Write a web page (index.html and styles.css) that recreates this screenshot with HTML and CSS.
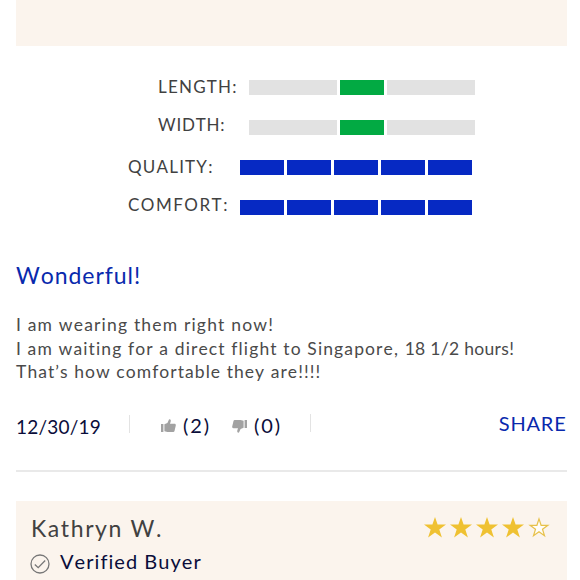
FILE: index.html
```html
<!DOCTYPE html>
<html lang="en">

<head>
  <meta charset="utf-8">
  <title>Customer Reviews</title>
  <link rel="stylesheet" href="styles.css">
</head>

<body>

  <main class="reviews">
    <article class="review">
      <div class="review-header review-header-end"></div>

      <div class="ratings">
        <div class="rating rating-fit">
          <span class="rating-label length">LENGTH:</span>
          <div class="bar fit-bar"><i></i><i class="selected"></i><i></i></div>
        </div>
        <div class="rating rating-fit">
          <span class="rating-label width">WIDTH:</span>
          <div class="bar fit-bar"><i></i><i class="selected"></i><i></i></div>
        </div>
        <div class="rating">
          <span class="rating-label quality">QUALITY:</span>
          <div class="bar score-bar"><i></i><i></i><i></i><i></i><i></i></div>
        </div>
        <div class="rating">
          <span class="rating-label comfort">COMFORT:</span>
          <div class="bar score-bar"><i></i><i></i><i></i><i></i><i></i></div>
        </div>
      </div>

      <h2 class="review-title">Wonderful!</h2>
      <div class="review-text">
        <p class="line-one">I am wearing them right now!</p>
        <p class="line-two">I am waiting for a direct flight to Singapore, <span class="flight-time">18 1/2 hours!</span></p>
        <p class="line-three">That’s how comfortable they are!!!!</p>
      </div>

      <div class="review-footer">
        <span class="date">12/30/19</span>
        <span class="divider"></span>
        <span class="vote vote-up">
          <svg viewBox="0 0 15 14"><path d="M0 5h2.4v8H0zM3.4 5.2 6.4 4 8 .4c1.4-.3 2.1.7 1.7 2L9 4.7h4.4c1 0 1.6.7 1.4 1.7l-1.3 5.5c-.2.8-.8 1.1-1.5 1.1H6.5l-3.1-.8z"/></svg>
          <span class="count">(2)</span>
        </span>
        <span class="vote vote-down">
          <svg viewBox="0 0 15 14"><path d="M15 9h-2.4V1H15zM11.6 8.8l-3 1.2L7 13.6c-1.4.3-2.1-.7-1.7-2L6 9.3H1.6C.6 9.3 0 8.6.2 7.6l1.3-5.5C1.7 1.3 2.3 1 3 1h5.5l3.1.8z"/></svg>
          <span class="count">(0)</span>
        </span>
        <span class="divider divider-last"></span>
        <a class="share">SHARE</a>
      </div>
    </article>

    <article class="review">
      <div class="review-header">
        <div class="reviewer">
          <div class="name">Kathryn W.</div>
          <div class="verified">
            <svg viewBox="0 0 20 20"><circle cx="10" cy="10" r="9"/><path d="m4.8 10.5 3.4 3.2 7-7.2"/></svg>
            <span class="verified-text">Verified Buyer</span>
          </div>
        </div>
        <div class="stars">
          <svg viewBox="0 0 22 21"><path d="m11 0 2.6 7.6H22l-6.7 4.9 2.6 8.1-6.9-5-6.9 5 2.6-8.1L0 7.6h8.4z"/></svg>
          <svg viewBox="0 0 22 21"><path d="m11 0 2.6 7.6H22l-6.7 4.9 2.6 8.1-6.9-5-6.9 5 2.6-8.1L0 7.6h8.4z"/></svg>
          <svg viewBox="0 0 22 21"><path d="m11 0 2.6 7.6H22l-6.7 4.9 2.6 8.1-6.9-5-6.9 5 2.6-8.1L0 7.6h8.4z"/></svg>
          <svg viewBox="0 0 22 21"><path d="m11 0 2.6 7.6H22l-6.7 4.9 2.6 8.1-6.9-5-6.9 5 2.6-8.1L0 7.6h8.4z"/></svg>
          <svg class="empty" viewBox="0 0 22 21"><path d="m11 1.9 2.1 6.4h6.8l-5.4 4 2 6.5-5.5-4-5.5 4 2-6.5-5.4-4h6.8z"/></svg>
        </div>
      </div>
    </article>
  </main>

</body>

</html>
```

FILE: styles.css
```css
* {
  margin: 0;
  padding: 0;
  box-sizing: border-box;
}

body {
  height: 580px;
  overflow: hidden;
  background: #fff;
  color: #4a4a4a;
  font-family: Lato, "Liberation Sans", sans-serif;
  font-kerning: none;
  font-variant-ligatures: none;
}

.reviews {
  width: 550.5px;
  margin-left: 16px;
}

.review-header {
  display: flex;
  justify-content: space-between;
  height: 80px;
  padding: 12px 17px 0 15px;
  background: #fbf4ed;
}

.review-header-end {
  height: 46px;
}

/* fit and score bars */
.ratings {
  height: 214px;
  padding: 34px 0 0 112px;
}

.rating {
  display: flex;
  height: 40px;
}

.rating-fit {
  padding-left: 30px;
}

.rating-label {
  width: 111.5px;
  margin-top: -5px;
  font-size: 17px;
  line-height: 24px;
  color: #414141;
  white-space: nowrap;
}

.rating-fit .rating-label {
  width: 90.5px;
}

.length {
  letter-spacing: 1.2px;
}

.rating .width {
  margin-top: -7px;
  letter-spacing: .8px;
}

.quality {
  letter-spacing: 1.2px;
}

.comfort {
  margin-top: -7px;
  letter-spacing: 1.5px;
}

.bar {
  display: flex;
  gap: 3px;
  height: 15px;
}

.fit-bar {
  width: 226.5px;
}

.fit-bar i {
  flex: 2;
  background: #e2e2e2;
}

.fit-bar .selected {
  flex: 1;
  background: #02aa43;
}

.score-bar {
  width: 232.5px;
  margin-top: -.5px;
}

.score-bar i {
  flex: 1;
  background: #0629c3;
}

.review-title {
  font-size: 23px;
  font-weight: 400;
  line-height: 30px;
  letter-spacing: .95px;
  color: #0929ad;
}

.review-text {
  margin-top: 23px;
  font-size: 17.5px;
  line-height: 23.5px;
  white-space: nowrap;
}

.line-one {
  letter-spacing: 1.18px;
}

.line-two {
  letter-spacing: 1.12px;
}

.flight-time {
  letter-spacing: .3px;
}

.line-three {
  letter-spacing: 1.05px;
}

.review-footer {
  display: flex;
  align-items: flex-start;
  height: 88px;
  padding-top: 30px;
  border-bottom: 2px solid #e9e9e9;
  font-size: 20px;
  line-height: 24px;
  color: #0a0d3a;
}

.date {
  width: 113px;
  margin-top: 1px;
  font-size: 19px;
  letter-spacing: .2px;
}

.divider {
  width: 1px;
  height: 18px;
  margin-top: 1px;
  background: #e3e3e3;
}

.divider-last {
  margin-top: 0;
}

.vote {
  display: flex;
  gap: 7px;
}

.vote svg {
  width: 15px;
  height: 14px;
  margin-top: 5px;
  fill: #a2a2a2;
}

.vote-up {
  width: 71px;
  margin-left: 31px;
}

.vote-down {
  width: 78px;
}

.count {
  margin-top: -1px;
  letter-spacing: 1.9px;
}

.share {
  margin: -3px 0 0 auto;
  letter-spacing: .8px;
  color: #0929ad;
}

.review + .review {
  margin-top: 29px;
}

.name {
  font-size: 23px;
  line-height: 30px;
  letter-spacing: 1.6px;
  color: #414141;
}

.verified {
  display: flex;
  gap: 10px;
  margin-left: -1px;
  font-size: 20px;
  line-height: 26px;
  letter-spacing: 1.05px;
  color: #0a0d3a;
}

.verified svg {
  width: 20px;
  height: 20px;
  margin-top: 11px;
  fill: none;
  stroke: #777;
  stroke-width: 1.3;
}

.verified-text {
  margin-top: 5px;
}

.stars {
  display: flex;
  gap: 4px;
  padding-top: 4px;
}

.stars svg {
  width: 22px;
  height: 21px;
  fill: #efc132;
}

.stars .empty {
  fill: #fffdf8;
  stroke: #e7c14a;
  stroke-width: 1.2;
}
```
